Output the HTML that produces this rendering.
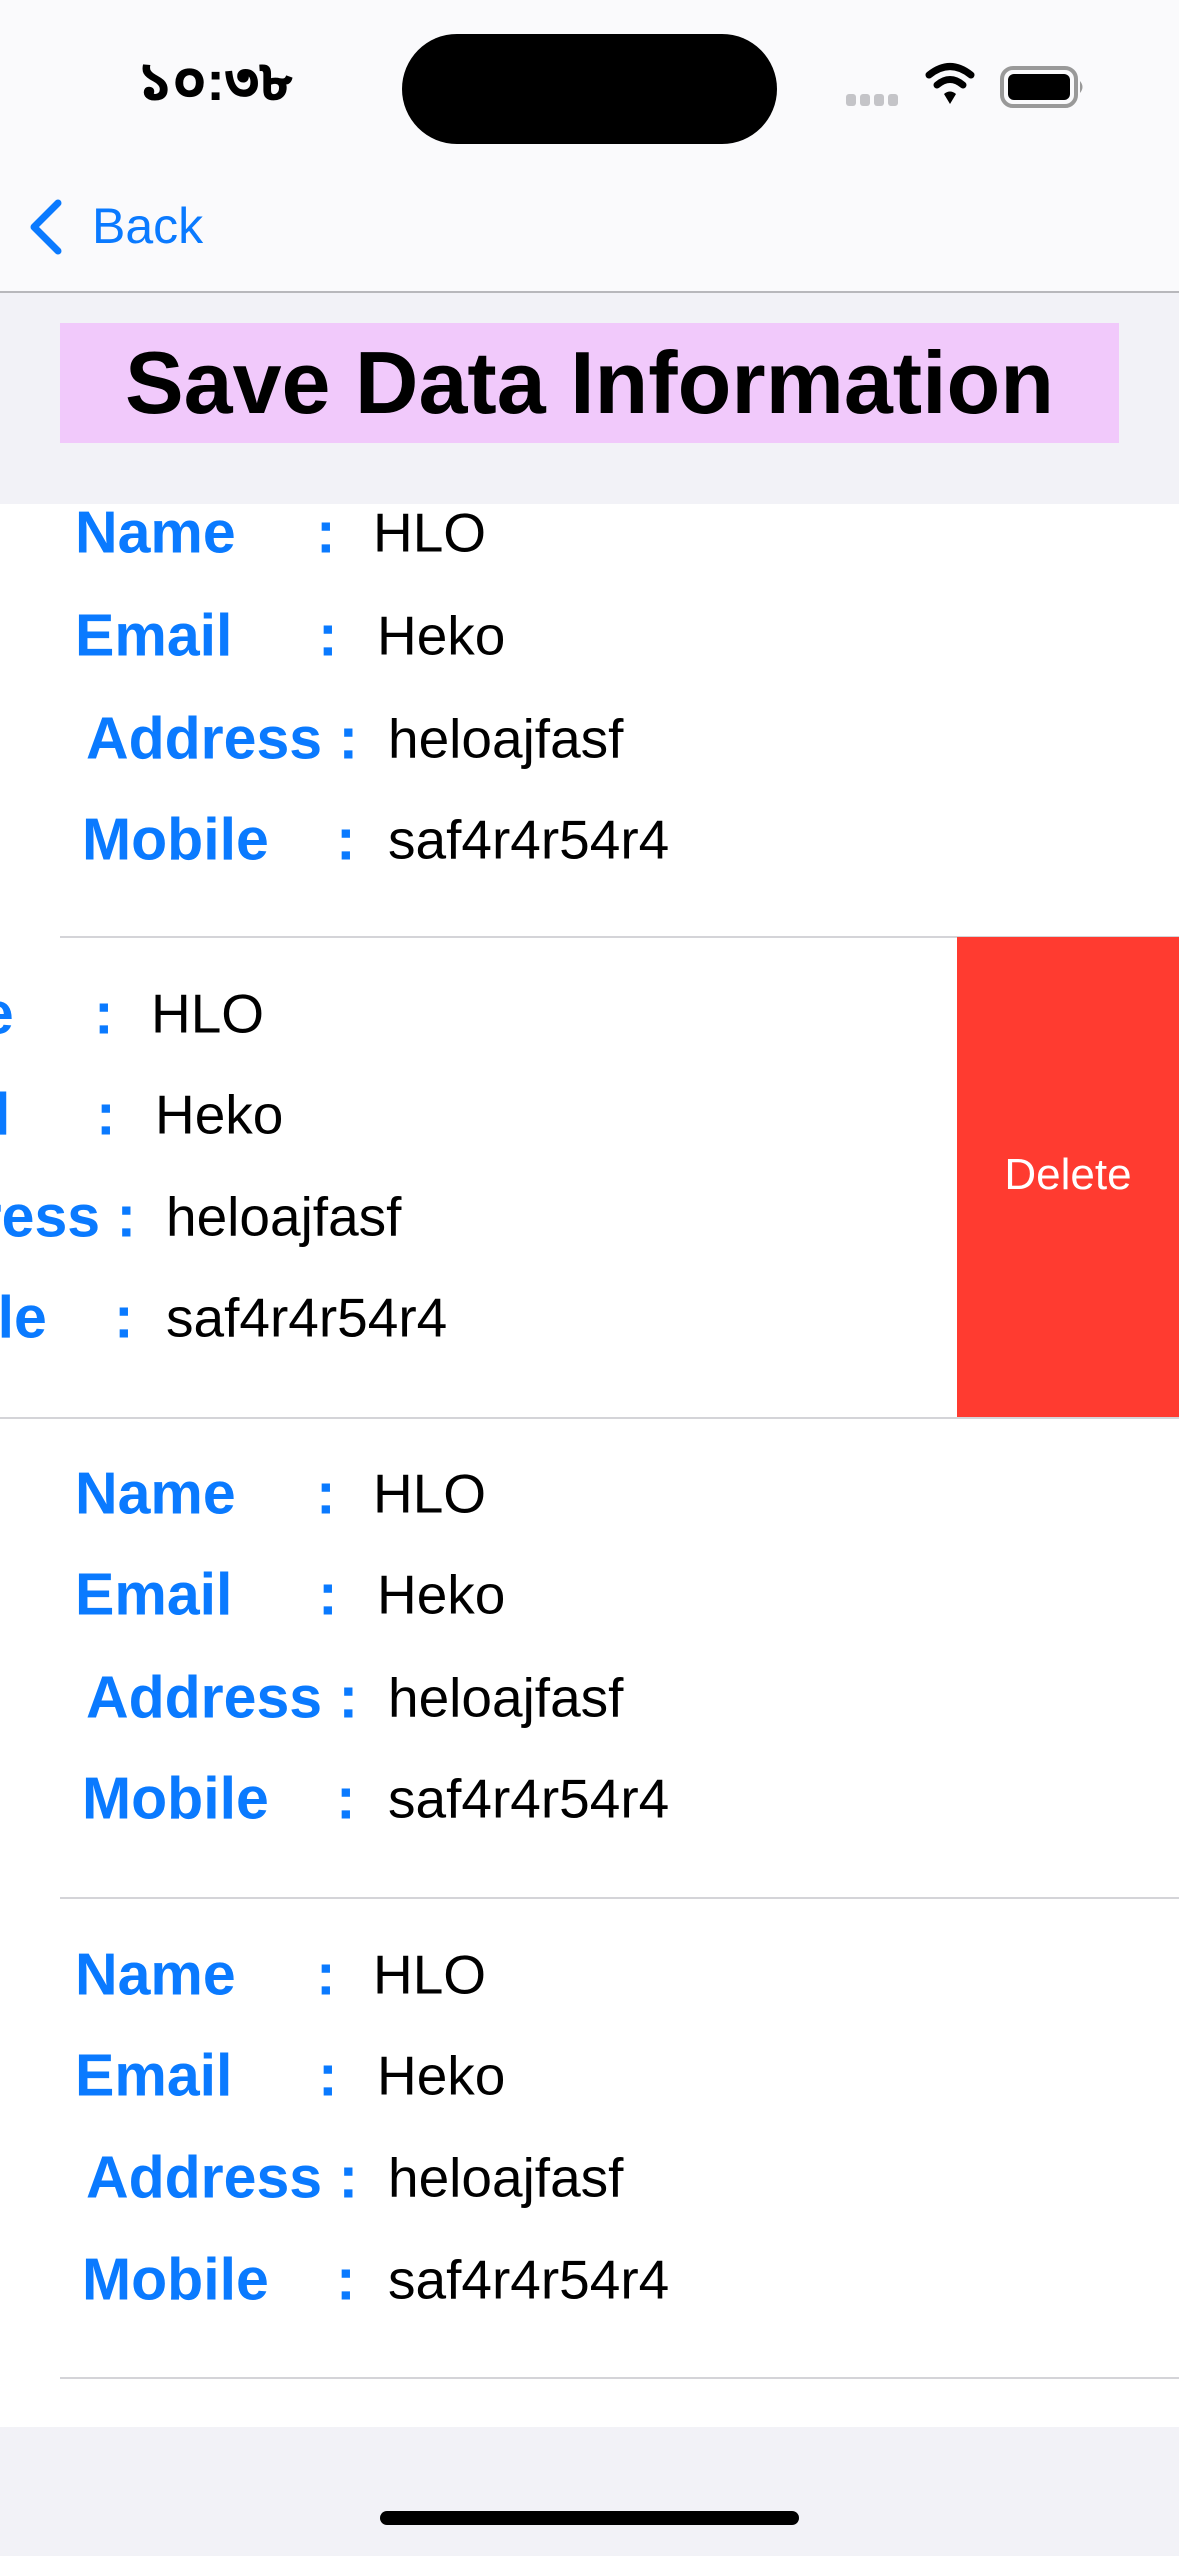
<!DOCTYPE html>
<html><head><meta charset="utf-8"><style>
*{margin:0;padding:0;box-sizing:border-box}
html,body{width:1179px;height:2556px;overflow:hidden}
body{position:relative;background:#f2f2f7;font-family:"Liberation Sans",Arial,sans-serif}
.abs{position:absolute;white-space:nowrap}
.nav{position:absolute;left:0;top:0;width:1179px;height:293px;background:#fafafc;border-bottom:2px solid #b8b8bc}
.lbl{position:absolute;color:#0a7aff;font-weight:bold;font-size:59px;line-height:1;transform:translateY(-50%)}
.val{position:absolute;color:#000;font-size:55px;line-height:1;transform:translateY(-50%)}
.sep{position:absolute;height:2px;background:#d4d4d8;right:0}
.clip{position:absolute;left:0;top:937px;width:1179px;height:480px;overflow:hidden}
</style></head><body>
<div class="nav"></div>
<div class="abs" style="left:138px;top:48px;font-size:56px;font-weight:bold;line-height:66px;font-family:'Liberation Sans','Noto Sans Bengali','Lohit Bengali',sans-serif">১০:৩৮</div>
<div class="abs" style="left:402px;top:34px;width:375px;height:110px;border-radius:55px;background:#000"></div>
<svg class="abs" style="left:840px;top:60px" width="250" height="55" viewBox="0 0 250 55">
<g fill="#c4c4c8"><rect x="6" y="34" width="10" height="12" rx="3"/><rect x="20" y="34" width="10" height="12" rx="3"/><rect x="34" y="34" width="10" height="12" rx="3"/><rect x="48" y="34" width="10" height="12" rx="3"/></g>
<g fill="none" stroke="#000" stroke-width="7" stroke-linecap="round"><path d="M89 15 Q110 -2 131 15"/><path d="M97 25 Q110 14 123 25"/></g>
<path d="M104 34 Q110 29 116 34 L110 44 Z" fill="#000"/>
<rect x="162" y="8" width="74" height="38" rx="11" fill="none" stroke="#999" stroke-width="4"/>
<rect x="168" y="14" width="62" height="26" rx="6" fill="#000"/>
<path d="M240 21 Q245 27 240 33 Z" fill="#999"/>
</svg>
<svg class="abs" style="left:24px;top:198px" width="44" height="60" viewBox="0 0 44 60"><path d="M34 5 L10 29 L34 53" fill="none" stroke="#0a7aff" stroke-width="7" stroke-linecap="round" stroke-linejoin="round"/></svg>
<div class="abs" style="left:92px;top:196px;font-size:50px;line-height:60px;color:#0a7aff">Back</div>
<div class="abs" style="left:60px;top:323px;width:1059px;height:120px;background:#f1c9fb"></div>
<div class="abs" style="left:60px;top:323px;width:1059px;height:120px;line-height:120px;text-align:center;font-size:88px;font-weight:bold;color:#000">Save Data Information</div>
<div class="abs" style="left:0;top:504px;width:1179px;height:1923px;background:#fff"></div>

<!-- Row 1 -->
<div class="lbl" style="left:75px;top:533px">Name</div><div class="lbl" style="left:316px;top:533px">:</div><div class="val" style="left:373px;top:533px">HLO</div>
<div class="lbl" style="left:75px;top:636px">Email</div><div class="lbl" style="left:318px;top:636px">:</div><div class="val" style="left:377px;top:636px">Heko</div>
<div class="lbl" style="left:86px;top:739px">Address :</div><div class="val" style="left:388px;top:739px">heloajfasf</div>
<div class="lbl" style="left:82px;top:840px">Mobile</div><div class="lbl" style="left:336px;top:840px">:</div><div class="val" style="left:388px;top:840px">saf4r4r54r4</div>
<div class="sep" style="left:60px;top:936px"></div>

<!-- Row 2 swiped -->
<div class="clip">
<div class="lbl" style="left:-147px;top:77px">Name</div><div class="lbl" style="left:94px;top:77px">:</div><div class="val" style="left:151px;top:77px">HLO</div>
<div class="lbl" style="left:-147px;top:178px">Email</div><div class="lbl" style="left:96px;top:178px">:</div><div class="val" style="left:155px;top:178px">Heko</div>
<div class="lbl" style="left:-136px;top:280px">Address :</div><div class="val" style="left:166px;top:280px">heloajfasf</div>
<div class="lbl" style="left:-140px;top:381px">Mobile</div><div class="lbl" style="left:114px;top:381px">:</div><div class="val" style="left:166px;top:381px">saf4r4r54r4</div>
<div class="abs" style="left:957px;top:0;width:222px;height:481px;background:#ff3b30;color:#fff;font-size:44px;line-height:476px;text-align:center">Delete</div>
</div>
<div class="sep" style="left:0;top:1417px"></div>

<!-- Row 3 -->
<div class="lbl" style="left:75px;top:1494px">Name</div><div class="lbl" style="left:316px;top:1494px">:</div><div class="val" style="left:373px;top:1494px">HLO</div>
<div class="lbl" style="left:75px;top:1595px">Email</div><div class="lbl" style="left:318px;top:1595px">:</div><div class="val" style="left:377px;top:1595px">Heko</div>
<div class="lbl" style="left:86px;top:1698px">Address :</div><div class="val" style="left:388px;top:1698px">heloajfasf</div>
<div class="lbl" style="left:82px;top:1799px">Mobile</div><div class="lbl" style="left:336px;top:1799px">:</div><div class="val" style="left:388px;top:1799px">saf4r4r54r4</div>
<div class="sep" style="left:60px;top:1897px"></div>

<!-- Row 4 -->
<div class="lbl" style="left:75px;top:1975px">Name</div><div class="lbl" style="left:316px;top:1975px">:</div><div class="val" style="left:373px;top:1975px">HLO</div>
<div class="lbl" style="left:75px;top:2076px">Email</div><div class="lbl" style="left:318px;top:2076px">:</div><div class="val" style="left:377px;top:2076px">Heko</div>
<div class="lbl" style="left:86px;top:2178px">Address :</div><div class="val" style="left:388px;top:2178px">heloajfasf</div>
<div class="lbl" style="left:82px;top:2280px">Mobile</div><div class="lbl" style="left:336px;top:2280px">:</div><div class="val" style="left:388px;top:2280px">saf4r4r54r4</div>
<div class="sep" style="left:60px;top:2377px"></div>

<div class="abs" style="left:380px;top:2511px;width:419px;height:14px;border-radius:7px;background:#000"></div>
</body></html>
